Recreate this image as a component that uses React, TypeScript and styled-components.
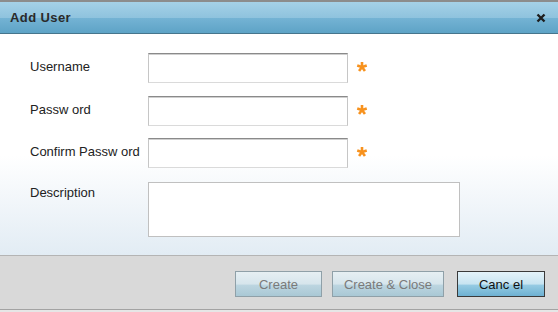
import React from "react";
import styled, { createGlobalStyle } from "styled-components";

const GlobalStyle = createGlobalStyle`
  html, body {
    margin: 0;
    padding: 0;
    background: #e6e6e6;
    font-family: "Liberation Sans", Arial, sans-serif;
  }
`;

const Dialog = styled.div`
  width: 558px;
  height: 312px;
  box-sizing: border-box;
  border-top: 2px solid #8c8c8c;
  display: flex;
  flex-direction: column;
  background: #e6e6e6;
`;

const TitleBar = styled.div`
  height: 31px;
  flex: none;
  display: flex;
  align-items: center;
  justify-content: space-between;
  padding: 0 12px 0 10px;
  background: linear-gradient(#a5d1e7 0%, #8fc3de 50%, #74b3d4 52%, #5ea3c6 100%);
  border-bottom: 1px solid #46758c;
  .title {
    font-size: 13px;
    font-weight: bold;
    color: #2a2a2a;
    letter-spacing: 0.4px;
  }
`;

const CloseButton = styled.button`
  border: none;
  background: none;
  padding: 0;
  width: 10px;
  height: 10px;
  display: flex;
  cursor: pointer;
`;

const Body = styled.div`
  height: 221px;
  flex: none;
  box-sizing: border-box;
  padding: 19px 0 0 30px;
  background: linear-gradient(#ffffff 0%, #ffffff 55%, #e2ecf4 100%);
`;

const Form = styled.form`
  display: grid;
  grid-template-columns: 118px auto 1fr;
  row-gap: 12.5px;
  align-items: center;
`;

const Label = styled.label<{ $top?: boolean }>`
  font-size: 13px;
  color: #222;
  line-height: 15px;
  align-self: ${(p) => (p.$top ? "start" : "center")};
  padding-top: ${(p) => (p.$top ? "4px" : "0")};
  padding-bottom: ${(p) => (p.$top ? "0" : "3px")};
  white-space: nowrap;
`;

const Input = styled.input`
  width: 200px;
  height: 30px;
  box-sizing: border-box;
  border: 1px solid #c6c6c6;
  border-top-color: #8a8a8a;
  border-bottom-color: #dadada;
  box-shadow: inset 0 1px 0 #cfcfcf;
  outline: none;
  padding: 0 4px;
  font-family: inherit;
  font-size: 13px;
  background: #fff;
`;

const TextArea = styled.textarea`
  width: 312px;
  height: 55px;
  box-sizing: border-box;
  border: 1px solid #c0c0c0;
  outline: none;
  resize: none;
  margin-top: 1px;
  font-family: inherit;
  font-size: 13px;
  background: #fff;
  grid-column: 2 / 4;
`;

const Required = styled.span`
  display: flex;
  padding: 0 0 2px 8px;
`;

const Footer = styled.div`
  flex: 1;
  background: #d9d9d9;
  border-top: 1px solid #b4b4b4;
  border-bottom: 1px solid #a3a3a3;
  margin-bottom: 2px;
  display: flex;
  justify-content: flex-end;
  align-items: flex-start;
  padding: 15px 13px 0 0;
  gap: 10px;
`;

const Button = styled.button<{ $primary?: boolean; $width: number }>`
  width: ${(p) => p.$width}px;
  height: 26px;
  box-sizing: border-box;
  font-family: "Liberation Sans", Arial, sans-serif;
  font-size: 13px;
  padding: 0;
  margin-left: ${(p) => (p.$primary ? "3px" : "0")};
  color: ${(p) => (p.$primary ? "#111" : "#7a7a7a")};
  border: 1px solid ${(p) => (p.$primary ? "#3a3a3a" : "#8fa0a8")};
  background: ${(p) =>
    p.$primary
      ? "linear-gradient(#e4f3fa 0%, #c7e4f1 50%, #95cbe3 55%, #6eb1d2 100%)"
      : "linear-gradient(#e6eff3 0%, #d6e5ec 50%, #bcd5e0 55%, #a9c8d5 100%)"};
  cursor: ${(p) => (p.$primary ? "pointer" : "default")};
`;

function Asterisk() {
  const arms = [-90, -18, 54, 126, 198];
  return (
    <Required>
      <svg width="12" height="12" viewBox="-6 -6 12 12">
        {arms.map((a) => {
          const r = (a * Math.PI) / 180;
          return (
            <line
              key={a}
              x1="0"
              y1="0"
              x2={(5 * Math.cos(r)).toFixed(2)}
              y2={(5 * Math.sin(r)).toFixed(2)}
              stroke="#f7921e"
              strokeWidth="2.6"
            />
          );
        })}
      </svg>
    </Required>
  );
}

export default function App() {
  return (
    <>
      <GlobalStyle />
      <Dialog>
        <TitleBar>
          <span className="title">Add User</span>
          <CloseButton aria-label="close">
            <svg width="10" height="10" viewBox="0 0 10 10">
              <path d="M1.5 1.5 L8.5 8.5 M8.5 1.5 L1.5 8.5" stroke="#1e1e1e" strokeWidth="2.4" />
            </svg>
          </CloseButton>
        </TitleBar>
        <Body>
          <Form onSubmit={(e) => e.preventDefault()}>
            <Label htmlFor="username">Username</Label>
            <Input id="username" type="text" />
            <Asterisk />

            <Label htmlFor="password">Passw ord</Label>
            <Input id="password" type="password" />
            <Asterisk />

            <Label htmlFor="confirm">Confirm Passw ord</Label>
            <Input id="confirm" type="password" />
            <Asterisk />

            <Label htmlFor="description" $top>
              Description
            </Label>
            <TextArea id="description" />
          </Form>
        </Body>
        <Footer>
          <Button $width={87} disabled>
            Create
          </Button>
          <Button $width={112} disabled>
            Create &amp; Close
          </Button>
          <Button $width={88} $primary>
            Canc el
          </Button>
        </Footer>
      </Dialog>
    </>
  );
}
